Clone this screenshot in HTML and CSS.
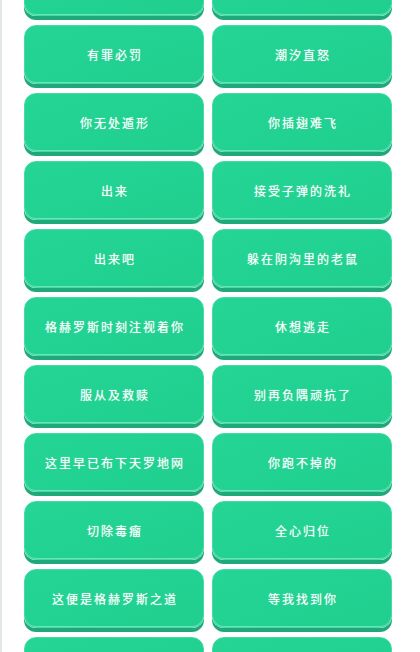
FILE: index.html
```html
<!DOCTYPE html>
<html lang="zh-CN">
<head>
    <meta charset="UTF-8">
    <meta name="viewport" content="width=device-width, initial-scale=1.0">
    <title>语音</title>
    <link rel="stylesheet" href="styles.css">
</head>
<body>
    <div class="page">
        <div class="grid">
            <button class="voice-btn"></button>
            <button class="voice-btn"></button>
            <button class="voice-btn">有罪必罚</button>
            <button class="voice-btn">潮汐直怒</button>
            <button class="voice-btn">你无处遁形</button>
            <button class="voice-btn">你插翅难飞</button>
            <button class="voice-btn">出来</button>
            <button class="voice-btn">接受子弹的洗礼</button>
            <button class="voice-btn">出来吧</button>
            <button class="voice-btn">躲在阴沟里的老鼠</button>
            <button class="voice-btn">格赫罗斯时刻注视着你</button>
            <button class="voice-btn">休想逃走</button>
            <button class="voice-btn">服从及救赎</button>
            <button class="voice-btn">别再负隅顽抗了</button>
            <button class="voice-btn">这里早已布下天罗地网</button>
            <button class="voice-btn">你跑不掉的</button>
            <button class="voice-btn">切除毒瘤</button>
            <button class="voice-btn">全心归位</button>
            <button class="voice-btn">这便是格赫罗斯之道</button>
            <button class="voice-btn">等我找到你</button>
            <button class="voice-btn"></button>
            <button class="voice-btn"></button>
        </div>
    </div>
</body>
</html>
```

FILE: styles.css
```css
html, body {
    margin: 0;
    padding: 0;
    height: 100%;
    overflow: hidden;
    background-color: #ffffff;
}
body {
    font-family: "Noto Sans CJK SC", "DejaVu Sans", sans-serif;
}
.page {
    border-left: 2px solid #e1e8e5;
    min-height: 100%;
    padding-left: 22px;
}
.grid {
    display: grid;
    grid-template-columns: 180px 180px;
    column-gap: 8px;
    row-gap: 9px;
    margin-top: -43px;
}
.voice-btn {
    height: 59px;
    padding: 0;
    border: 1px solid #47daa6;
    border-radius: 12px;
    background: linear-gradient(160deg, #24d596 0%, #20cf8e 100%);
    box-shadow: 0 4px 0 #1fa97b, inset 0 -1px 0 #6be3b8;
    color: #ffffff;
    font-family: inherit;
    font-size: 12px;
    letter-spacing: 2px;
    text-indent: 2px;
    text-shadow: 0 0 1px rgba(255, 255, 255, 0.6);
    cursor: pointer;
}
```
